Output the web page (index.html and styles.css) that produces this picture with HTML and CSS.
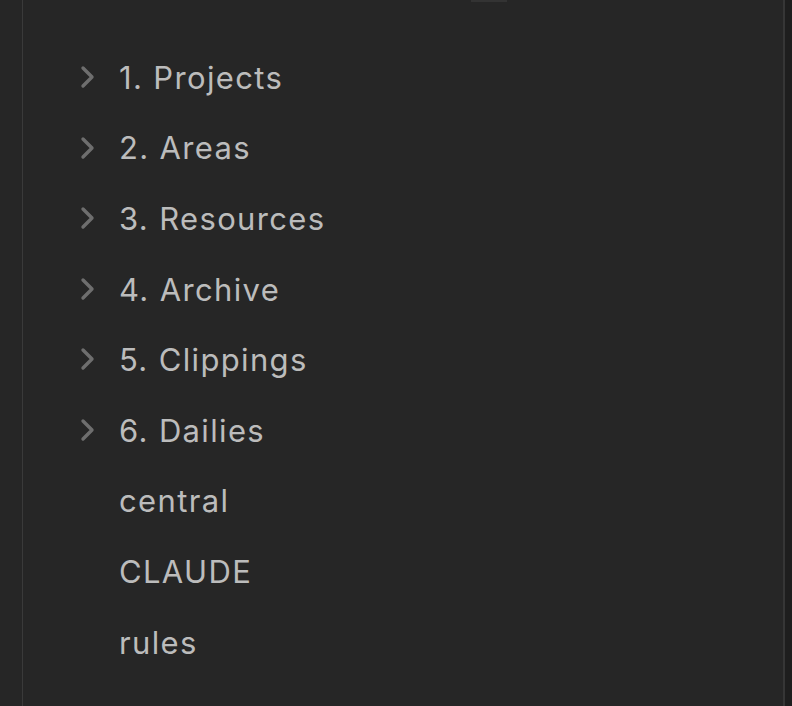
FILE: index.html
```html
<!DOCTYPE html>
<html>
<head>
<meta charset="utf-8">
<link rel="stylesheet" href="styles.css">
</head>
<body>
<div class="app">
  <div class="gutter"></div>
  <div class="pane">
    <div class="tab-mark"></div>
    <ul class="tree">
      <li class="item folder"><svg class="chev" viewBox="0 0 16 24" width="16" height="24"><path d="M3 3 L12 12 L3 21" /></svg><span>1. Projects</span></li>
      <li class="item folder"><svg class="chev" viewBox="0 0 16 24" width="16" height="24"><path d="M3 3 L12 12 L3 21" /></svg><span>2. Areas</span></li>
      <li class="item folder"><svg class="chev" viewBox="0 0 16 24" width="16" height="24"><path d="M3 3 L12 12 L3 21" /></svg><span>3. Resources</span></li>
      <li class="item folder"><svg class="chev" viewBox="0 0 16 24" width="16" height="24"><path d="M3 3 L12 12 L3 21" /></svg><span>4. Archive</span></li>
      <li class="item folder"><svg class="chev" viewBox="0 0 16 24" width="16" height="24"><path d="M3 3 L12 12 L3 21" /></svg><span>5. Clippings</span></li>
      <li class="item folder"><svg class="chev" viewBox="0 0 16 24" width="16" height="24"><path d="M3 3 L12 12 L3 21" /></svg><span>6. Dailies</span></li>
      <li class="item file"><span>central</span></li>
      <li class="item file"><span>CLAUDE</span></li>
      <li class="item file"><span>rules</span></li>
    </ul>
  </div>
  <div class="edge"></div>
</div>
</body>
</html>
```
FILE: styles.css
```css
html, body {
  margin: 0;
  padding: 0;
  background: #262626;
}
.app {
  display: flex;
  width: 792px;
  height: 706px;
  overflow: hidden;
}
.gutter {
  width: 22px;
  flex: none;
  background: #262626;
  border-right: 1px solid #3a3a3a;
}
.pane {
  flex: 1;
  position: relative;
  background: #262626;
  border-right: 2px solid #363636;
}
.edge {
  width: 7px;
  flex: none;
  background: #1e1e1e;
}
.tab-mark {
  position: absolute;
  top: 0;
  left: 448px;
  width: 36px;
  height: 2px;
  background: #333333;
}
.tree {
  list-style: none;
  margin: 0;
  padding: 42px 0 0 0;
}
.item {
  display: flex;
  align-items: center;
  height: 70.6px;
  font-family: Inter, "Noto Sans", sans-serif;
  font-size: 31px;
  letter-spacing: 1.35px;
  color: #bcbcbc;
  padding-left: 96px;
  position: relative;
}
.chev {
  position: absolute;
  left: 57px;
  top: 23px;
  fill: none;
  stroke: #6e6e6e;
  stroke-width: 3.4;
  stroke-linecap: round;
  stroke-linejoin: round;
}
```
